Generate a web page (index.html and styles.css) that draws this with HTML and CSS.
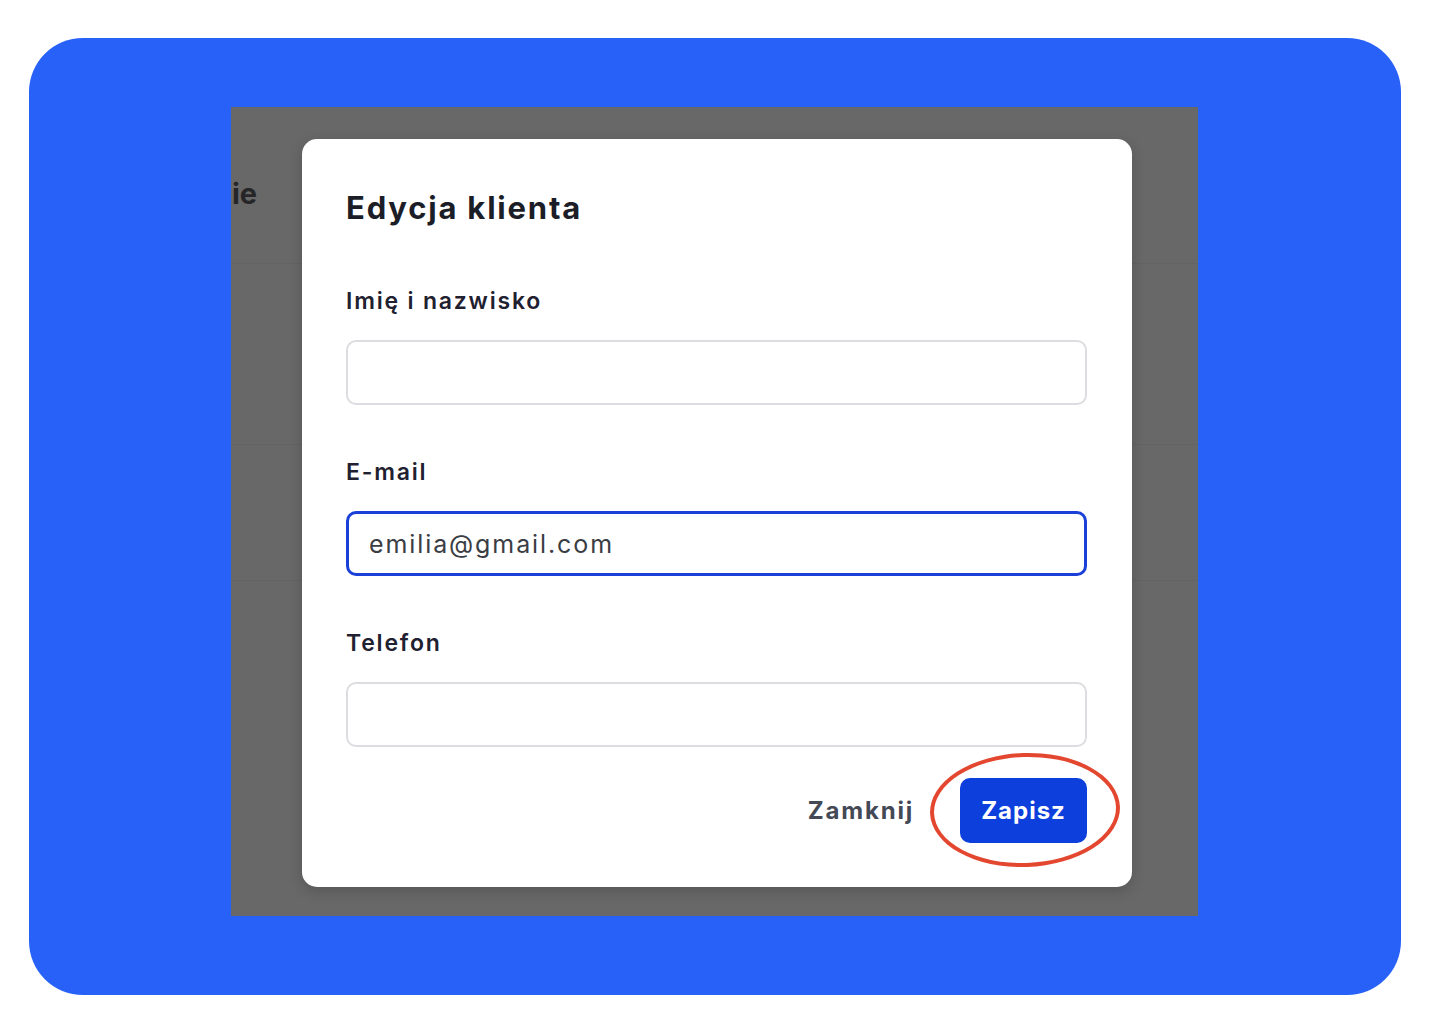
FILE: index.html
```html
<!DOCTYPE html>
<html lang="pl">
<head>
  <meta charset="UTF-8">
  <meta name="viewport" content="width=device-width, initial-scale=1.0">
  <title>Edycja klienta</title>
  <link rel="stylesheet" href="styles.css">
</head>
<body>
  <div class="frame">
    <div class="shot">
      <div class="backdrop">
        <div class="page-title">ie</div>
        <div class="rule rule-1"></div>
        <div class="rule rule-2"></div>
        <div class="rule rule-3"></div>
      </div>

      <div class="modal">
        <h2 class="modal-title">Edycja klienta</h2>

        <div class="field">
          <label for="name">Imię i nazwisko</label>
          <input id="name" type="text">
        </div>

        <div class="field">
          <label for="email">E-mail</label>
          <input id="email" type="text" class="is-focused" value="emilia@gmail.com">
        </div>

        <div class="field">
          <label for="phone">Telefon</label>
          <input id="phone" type="text">
        </div>

        <div class="actions">
          <button class="btn-link">Zamknij</button>
          <div class="highlight">
            <button class="btn-primary">Zapisz</button>
            <span class="ring"></span>
          </div>
        </div>
      </div>
    </div>
  </div>
</body>
</html>
```

FILE: styles.css
```css
*, *::before, *::after {
  padding: 0;
  margin: 0;
  box-sizing: border-box;
}

body {
  background: #fff;
  font-family: Inter, "Noto Sans", sans-serif;
  color: #1b1d27;
}

.frame {
  margin: 38px 39px 0 29px;
  height: 957px;
  background: #2761f7;
  border-radius: 54px;
  padding: 69px 0 0 202px;
}

.shot {
  position: relative;
  width: 967px;
  height: 809px;
  background: #686868;
  padding: 32px 0 0 71px;
}

/* dimmed page behind the dialog */
.backdrop {
  position: absolute;
  inset: 0;
  overflow: hidden;
}

.page-title {
  margin: 70px 0 0 1px;
  font-size: 29px;
  line-height: 34px;
  font-weight: 700;
  color: #262628;
}

.rule {
  position: absolute;
  left: 0;
  right: 0;
  height: 1px;
  background: #636363;
}

.rule-1 { top: 156px; }
.rule-2 { top: 337px; }
.rule-3 { top: 473px; }

.modal {
  position: relative;
  width: 830px;
  height: 748px;
  background: #fff;
  border-radius: 15px;
  box-shadow: 0 4px 14px rgba(0, 0, 0, .18);
  padding: 51px 45px 0 44px;
  display: flex;
  flex-direction: column;
}

.modal-title {
  font-size: 31px;
  line-height: 36px;
  font-weight: 700;
  letter-spacing: 1.8px;
  color: #1b1d27;
  margin-bottom: 61px;
}

.field {
  display: flex;
  flex-direction: column;
  gap: 25px;
  margin-bottom: 53px;
}

.field label {
  font-size: 23px;
  line-height: 28px;
  font-weight: 600;
  letter-spacing: 1.8px;
  color: #1f2130;
}

.field input {
  height: 65px;
  border: 2px solid #dcdde0;
  border-radius: 10px;
  padding: 0 20px;
  font-family: inherit;
  font-size: 25px;
  letter-spacing: 1.9px;
  color: #3b3d44;
  outline: none;
  background: #fff;
}

.field input.is-focused {
  border: 3px solid #1b40d8;
}

.field:nth-of-type(3) {
  margin-bottom: 31px;
}

.actions {
  display: flex;
  justify-content: flex-end;
  align-items: center;
  gap: 46px;
}

.btn-link {
  border: 0;
  background: none;
  font-family: inherit;
  font-size: 24px;
  font-weight: 700;
  letter-spacing: 1.8px;
  color: #444a55;
}

.highlight {
  position: relative;
}

.btn-primary {
  display: block;
  width: 127px;
  height: 65px;
  border: 0;
  border-radius: 10px;
  background: #0c3fdc;
  color: #fff;
  font-family: inherit;
  font-size: 24px;
  font-weight: 700;
  letter-spacing: 1px;
}

/* red annotation circle */
.ring {
  position: absolute;
  left: -30px;
  right: -33px;
  top: -25px;
  bottom: -24px;
  border: 4px solid #e4472f;
  border-radius: 50%;
  transform: rotate(-2deg);
}
```
